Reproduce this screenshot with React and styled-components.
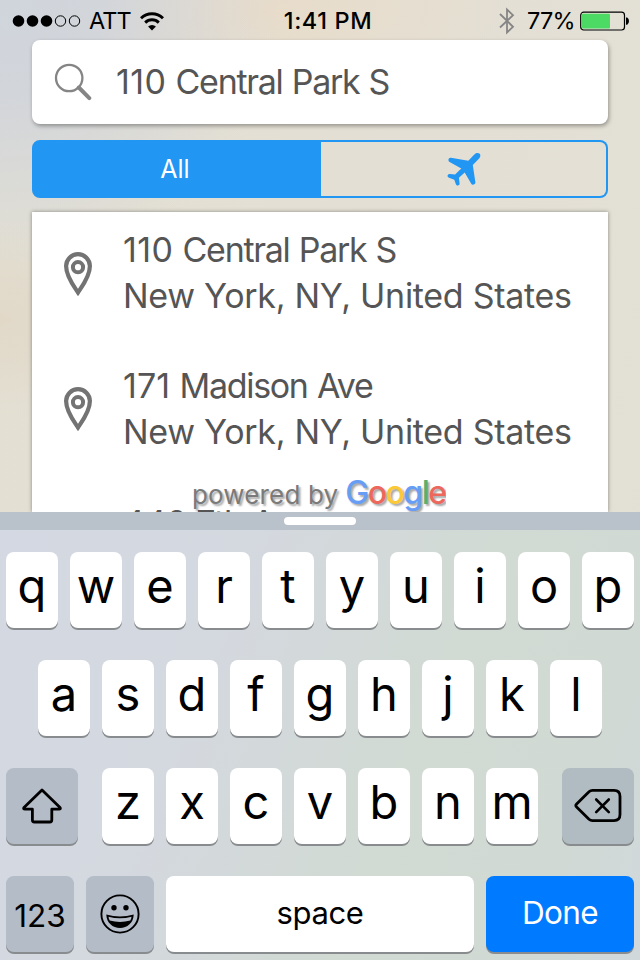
import React from "react";
import styled, { createGlobalStyle } from "styled-components";

const BLUE = "#2196f3";
const BODY_TEXT = "#555555";

const GlobalStyle = createGlobalStyle`
  * {
    box-sizing: border-box;
  }

  body {
    margin: 0;
    font-family: Inter, "Liberation Sans", sans-serif;
  }
`;

const Screen = styled.main`
  display: flex;
  flex-direction: column;
  width: 640px;
  height: 960px;
  overflow: hidden;
  background:
    radial-gradient(ellipse 280px 270px at 0 0, #d0d5dc 0, #d2d5da 35%, transparent 100%),
    radial-gradient(ellipse 160px 100px at 0 320px, #e1d8c8 0, transparent 100%),
    radial-gradient(ellipse 260px 90px at 260px 10px, #e8dcca 0, transparent 100%),
    linear-gradient(100deg, #e3e0d3 0%, #e4dfd4 50%, #e2e0d5 100%);
`;

const StatusBar = styled.header`
  display: grid;
  grid-template-columns: 1fr auto 1fr;
  align-items: center;
  height: 40px;
  padding: 2px 10px 0 12px;
  font-size: 23.5px;
  line-height: 28px;
`;

const StatusGroup = styled.div`
  display: flex;
  align-items: center;
  justify-content: ${({ $end }) => ($end ? "flex-end" : "flex-start")};

  svg {
    display: block;
    flex: none;
  }
`;

const Carrier = styled.span`
  margin: 0 9px 0 8px;
  letter-spacing: -0.9px;
`;

const Clock = styled.span`
  margin-left: 14px;
  font-weight: 500;
  letter-spacing: 0.6px;
`;

const Percent = styled.span`
  margin: 0 5px 0 12px;
  letter-spacing: -0.7px;
`;

const SearchBox = styled.div`
  display: flex;
  align-items: center;
  flex: none;
  height: 84px;
  margin: 0 32px;
  padding-left: 22px;
  border-radius: 8px;
  background: #fff;
  box-shadow: 1px 2px 4px rgba(0, 0, 0, 0.35);
`;

const Digits = styled.span`
  letter-spacing: ${({ $spacing }) => $spacing}px;
`;

const Query = styled.span`
  margin-left: 24px;
  color: ${BODY_TEXT};
  font-size: 34px;
  line-height: 46px;
  letter-spacing: -1.3px;
  word-spacing: 1px;
`;

const Segments = styled.div`
  display: grid;
  grid-template-columns: 289px 1fr;
  flex: none;
  height: 58px;
  margin: 16px 32px 14px;
`;

const Segment = styled.button`
  display: flex;
  align-items: center;
  justify-content: center;
  padding: 0 3px 0 0;
  border: 2px solid ${BLUE};
  border-radius: ${({ $active }) => ($active ? "8px 0 0 8px" : "0 8px 8px 0")};
  border-left-width: ${({ $active }) => ($active ? 2 : 0)}px;
  background: ${({ $active }) => ($active ? BLUE : "transparent")};
  color: ${({ $active }) => ($active ? "#fff" : BLUE)};
  font-family: inherit;
  font-size: 25px;

  svg {
    margin: 2px 0 0 4px;
  }
`;

const Results = styled.div`
  position: relative;
  flex: none;
  height: 300px;
  margin: 0 32px;
  background: #fff;
  box-shadow: 0 0 4px rgba(0, 0, 0, 0.4);
`;

const ResultList = styled.ul`
  height: 300px;
  margin: 0;
  padding: 15px 0 0;
  overflow: hidden;
  list-style: none;
`;

const Result = styled.li`
  display: flex;
  align-items: flex-start;
  height: 135.5px;
  padding-left: 31px;
  color: ${BODY_TEXT};
  font-size: 34px;
  line-height: 46px;
  white-space: nowrap;

  &:last-child {
    margin-top: 2px;
  }

  svg {
    flex: none;
    margin: 23.5px 30px 0 0;
  }
`;

const Place = styled.div`
  letter-spacing: -1.3px;
  word-spacing: 1px;
`;

const Region = styled.div`
  letter-spacing: -0.3px;
`;

/* floats over the last, cut-off result */
const Attribution = styled.div`
  position: absolute;
  left: 160px;
  bottom: 0;
  display: flex;
  align-items: baseline;
  height: 36px;
  overflow: hidden;
  color: #7a7a7a;
  font-size: 26px;
  letter-spacing: 0.15px;
  line-height: 34px;
  text-shadow: 2px 2px 2px rgba(0, 0, 0, 0.35);
`;

const Google = styled.span`
  margin-left: 7px;
  font-size: 32px;
  font-weight: 500;
  letter-spacing: -1.5px;
`;

const Letter = styled.span`
  color: ${({ $color }) => $color};
`;

const Grabber = styled.div`
  position: relative;
  display: flex;
  justify-content: center;
  flex: none;
  height: 18px;
  padding-top: 5px;
  background: #b9c1ca;

  &::after {
    content: "";
    width: 72px;
    height: 8px;
    border-radius: 4px;
    background: #fff;
  }
`;

const Keyboard = styled.section`
  display: flex;
  flex: 1;
  flex-direction: column;
  gap: 32px;
  padding: 22px 6px 0;
  background: linear-gradient(112deg, #d4d8e2 0%, #d4d8df 32%, #d1dad3 62%, #d1d9d4 84%, #d0d8dc 100%);
`;

const KeyRow = styled.div`
  display: flex;
  justify-content: ${({ $spread }) => ($spread ? "space-between" : "center")};
  gap: 12px;
`;

const Letters = styled.div`
  display: flex;
  gap: 12px;
`;

const KEY_COLORS = {
  light: ["#fff", "#000"],
  dark: ["#b4bcc8", "#000"],
  steel: ["#b1bcc2", "#000"],
  primary: ["#007aff", "#fff"],
};

const Key = styled.button`
  display: flex;
  align-items: center;
  justify-content: center;
  flex: none;
  width: ${({ $width = 52 }) => $width}px;
  height: 76px;
  padding: ${({ $drop = 0 }) => $drop}px 0 ${({ $lift = 0 }) => $lift}px;
  border: none;
  border-radius: 8px;
  background: ${({ $tone = "light" }) => KEY_COLORS[$tone][0]};
  color: ${({ $tone = "light" }) => KEY_COLORS[$tone][1]};
  box-shadow: 0 2px 0 #898c8e;
  font-family: inherit;
  font-size: ${({ $size = 47 }) => $size}px;
  line-height: 60px;
  letter-spacing: ${({ $spacing = 0 }) => $spacing}px;
`;

const SignalDots = () => (
  <svg width="69" height="14" viewBox="0 0 69 14">
    {[6.5, 20.5, 34.5].map((x) => (
      <circle key={x} cx={x} cy="7" r="5.8" />
    ))}
    {[48.5, 62.5].map((x) => (
      <circle key={x} cx={x} cy="7" r="5.2" fill="none" stroke="#000" />
    ))}
  </svg>
);

const WifiIcon = () => (
  <svg width="24" height="19" viewBox="0 0 24 19" fill="none" stroke="#000" strokeWidth="2.9">
    <path d="M1 6.2a15.8 15.8 0 0 1 22 0" />
    <path d="M5.2 10.6a9.7 9.7 0 0 1 13.6 0" />
    <path d="M12 18.5 8.1 14.5a5.5 5.5 0 0 1 7.8 0z" fill="#000" stroke="none" />
  </svg>
);

const BluetoothIcon = () => (
  <svg width="16" height="28" viewBox="0 0 16 28" fill="none" stroke="#858585" strokeWidth="1.8">
    <path d="M1 7 14 19.8 8 25.5V2.5l6 5.7L1 20.5" />
  </svg>
);

const BatteryIcon = () => (
  <svg width="50" height="20" viewBox="0 0 50 20">
    <rect x="0.7" y="1.2" width="43.8" height="17.8" rx="3" fill="none" stroke="#000" strokeWidth="1.2" />
    <rect x="2" y="2.7" width="28" height="14.8" rx="1" fill="#4cd964" />
    <path d="M46 6.5h1.2q1.8 1 1.8 3.6t-1.8 3.6H46z" />
  </svg>
);

const SearchIcon = () => (
  <svg width="38" height="38" viewBox="0 0 38 38" fill="none" stroke="#858585">
    <circle cx="15.2" cy="15" r="13.2" strokeWidth="2.3" />
    <path d="m24.8 24.5 10.5 10.6" strokeWidth="4" strokeLinecap="round" />
  </svg>
);

const PlaneIcon = () => (
  <svg width="36" height="36" viewBox="0 0 36 36" fill="currentColor">
    <path d="M28.6 2.3c1.3-1.3 3.5-1.8 4.8-.7 1.5 1.2 1.1 3.5-.3 4.9l-6.3 6.5 2.6 17.4c.2 1.7-3 3.3-4 1.5l-6.7-11.5-5.8 5.4.7 5.7c.2 2.2-2.9 2.8-3.7.7l-1.6-4.4-5.3-2c-2.4-.8-1.5-4 .7-3.7l5.4.4 6.2-5.9L3.6 10C1.5 8.7 2.4 5.4 4.9 5.8l17.4 3z" />
  </svg>
);

const PinIcon = () => (
  <svg width="30" height="46" viewBox="0 0 30 46" fill="none" stroke="#737373">
    <path d="M15 41.5C11 35.5 3.1 25.8 3.1 15.1a11.9 11.9 0 0 1 23.8 0C26.9 25.8 19 35.5 15 41.5z" strokeWidth="4.2" />
    <circle cx="15" cy="16.2" r="5.1" strokeWidth="4" />
  </svg>
);

const ShiftIcon = () => (
  <svg width="40" height="36" viewBox="0 0 40 36" fill="none" stroke="#000" strokeWidth="2.8" strokeLinejoin="round">
    <path d="M20 2 38 19.5q1 1.7-1 1.7h-7.2V32q0 2-2 2H12.4q-2 0-2-2V21.2H3q-2 0-1-1.7z" />
  </svg>
);

const BackspaceIcon = () => (
  <svg width="48" height="36" viewBox="0 0 48 36" fill="none" stroke="#000" strokeWidth="2.8" strokeLinecap="round" strokeLinejoin="round">
    <path d="M18.5 2.4H40q6 0 6 6v18.2q0 6-6 6H18.5q-2 0-3.5-1.4L2.6 19q-1.5-1.5 0-3L15 3.8q1.5-1.4 3.5-1.4z" />
    <path d="m22.2 11.5 12.6 12.6M34.8 11.5 22.2 24.1" strokeWidth="2.6" />
  </svg>
);

const EmojiIcon = () => (
  <svg width="40" height="40" viewBox="0 0 40 40">
    <circle cx="20" cy="20" r="18.6" fill="none" stroke="#000" strokeWidth="1.9" />
    <circle cx="14" cy="13.8" r="2.7" />
    <circle cx="26" cy="13.8" r="2.7" />
    <path d="M6.3 20.6q13.7 4 27.4 0C33.5 29 27.3 34 20 34S6.5 29 6.3 20.6z" />
    <path d="M8.5 22.8q11.5 3 23 0-.2 2-1.2 3.8-10.3 2.8-20.6 0-1-1.8-1.2-3.8z" fill="#b4bcc8" />
  </svg>
);

const RESULTS = [
  { number: "110", street: "Central Park S", region: "New York, NY, United States", spacing: 0.4 },
  { number: "171", street: "Madison Ave", region: "New York, NY, United States", spacing: 0.1 },
  { number: "440", street: "7th Ave", region: "", spacing: -0.5 },
];

const GOOGLE_LETTERS = [
  ["G", "#689df6"],
  ["o", "#ec675c"],
  ["o", "#fbc938"],
  ["g", "#689df6"],
  ["l", "#58b070"],
  ["e", "#ec675c"],
];

const LetterKeys = ({ letters }) => (
  <Letters>
    {letters.split("").map((letter) => (
      <Key key={letter} $lift={8}>
        {letter}
      </Key>
    ))}
  </Letters>
);

const App = () => {
  return (
    <>
      <GlobalStyle />
      <Screen>
        <StatusBar>
          <StatusGroup>
            <SignalDots />
            <Carrier>ATT</Carrier>
            <WifiIcon />
          </StatusGroup>
          <Clock>1:41 PM</Clock>
          <StatusGroup $end>
            <BluetoothIcon />
            <Percent>77%</Percent>
            <BatteryIcon />
          </StatusGroup>
        </StatusBar>

        <SearchBox>
          <SearchIcon />
          <Query>
            <Digits $spacing={0.4}>110</Digits> Central Park S
          </Query>
        </SearchBox>

        <Segments>
          <Segment $active>All</Segment>
          <Segment>
            <PlaneIcon />
          </Segment>
        </Segments>

        <Results>
          <ResultList>
            {RESULTS.map(({ number, street, region, spacing }) => (
              <Result key={number}>
                <PinIcon />
                <div>
                  <Place>
                    <Digits $spacing={spacing}>{number}</Digits> {street}
                  </Place>
                  <Region>{region}</Region>
                </div>
              </Result>
            ))}
          </ResultList>
          <Attribution>
            powered by
            <Google>
              {GOOGLE_LETTERS.map(([letter, color], i) => (
                <Letter key={i} $color={color}>
                  {letter}
                </Letter>
              ))}
            </Google>
          </Attribution>
        </Results>

        <Grabber />

        <Keyboard>
          <KeyRow>
            <LetterKeys letters="qwertyuiop" />
          </KeyRow>
          <KeyRow>
            <LetterKeys letters="asdfghjkl" />
          </KeyRow>
          <KeyRow $spread>
            <Key $width={72} $tone="dark">
              <ShiftIcon />
            </Key>
            <LetterKeys letters="zxcvbnm" />
            <Key $width={72} $tone="steel">
              <BackspaceIcon />
            </Key>
          </KeyRow>
          <KeyRow>
            <Key $width={68} $tone="dark" $size={31.5} $drop={4}>
              123
            </Key>
            <Key $width={68} $tone="dark">
              <EmojiIcon />
            </Key>
            <Key $width={308} $size={31} $lift={2} $spacing={-0.4}>
              space
            </Key>
            <Key $width={148} $tone="primary" $size={31.5} $lift={2} $spacing={-0.6}>
              Done
            </Key>
          </KeyRow>
        </Keyboard>
      </Screen>
    </>
  );
};

export default App;
